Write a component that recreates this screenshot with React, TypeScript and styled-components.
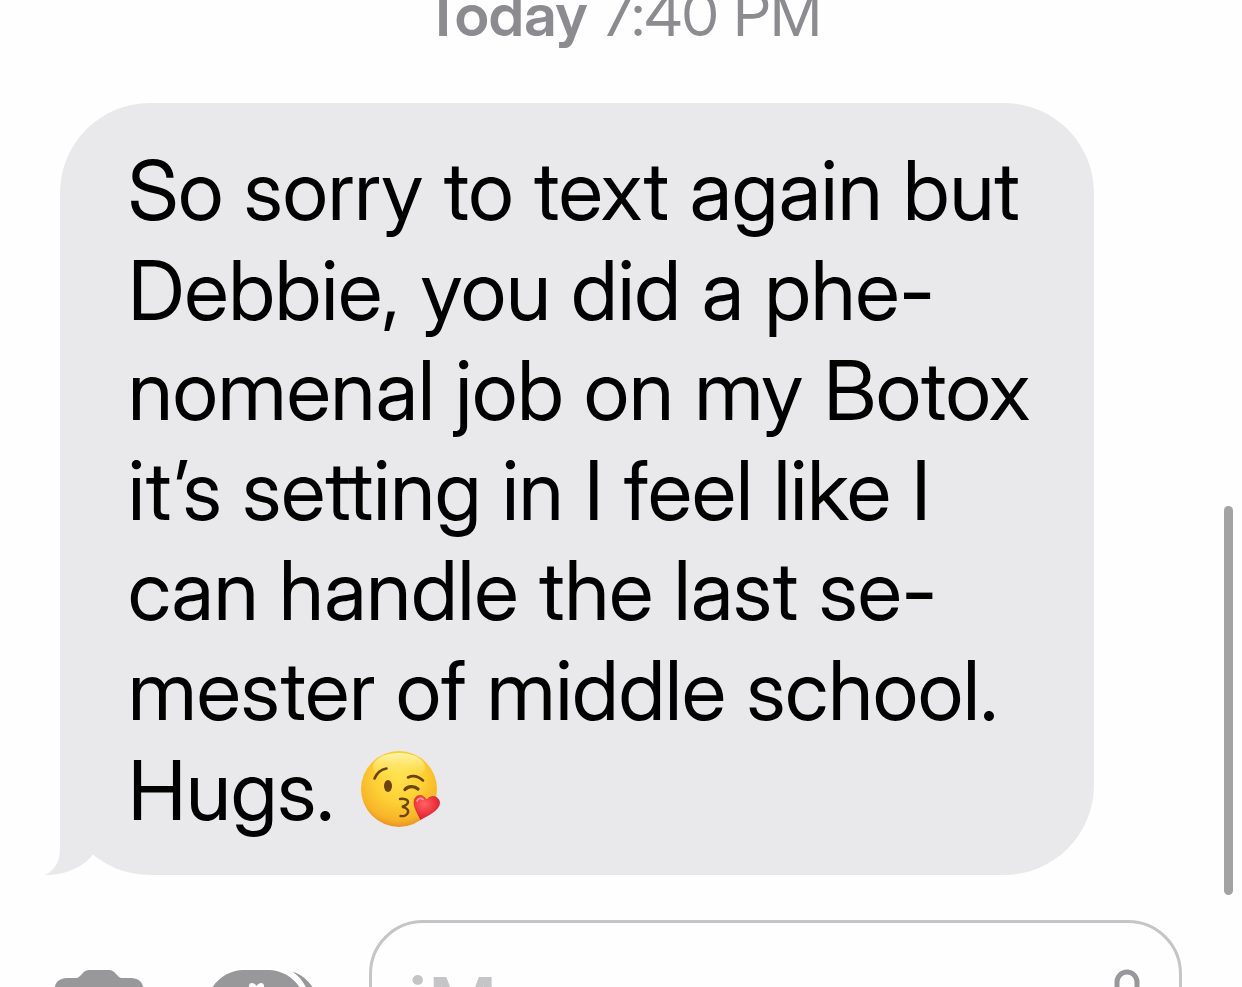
import React from "react";
import styled, { createGlobalStyle } from "styled-components";

const GlobalStyle = createGlobalStyle`
  *, *::before, *::after { box-sizing: border-box; }
  html, body { margin: 0; background: #fefefe; }
  body {
    font-family: "Inter Display", Inter, "Liberation Sans", sans-serif;
    font-feature-settings: "calt" 0, "liga" 0, "dlig" 0;
  }
`;

const Screen = styled.main`
  position: relative;
  height: 100vh;
  overflow: hidden;
  background: #fefefe;
`;

const Timestamp = styled.p`
  margin: -18px 0 0;
  padding-left: 4px;
  text-align: center;
  font-size: 60px;
  line-height: 64px;
  color: #8b8b90;
`;

const Day = styled.strong`
  font-weight: 600;
`;

const Bubble = styled.article`
  position: relative;
  margin: 57px 148px 0 60px;
  padding: 38px 0 34px 68px;
  border-radius: 90px;
  background: #e9e9eb;
  color: #000;
`;

const Tail = styled.svg`
  position: absolute;
  left: -16px;
  bottom: 0;
  width: 110px;
  height: 100px;
  fill: #e9e9eb;
`;

const Message = styled.p`
  position: relative;
  margin: 0;
  font-size: 82px;
  line-height: 100px;
`;

const Line = styled.span`
  display: block;
  height: 100px;
  white-space: nowrap;
`;

const Emoji = styled.svg`
  width: 80px;
  height: 80px;
  margin-left: 5px;
  vertical-align: -10px;
`;

const Composer = styled.form`
  display: flex;
  align-items: center;
  margin-top: 45px;
  padding: 0 60px 0 54px;
`;

const IconButton = styled.button<{ $width: number; $gap: number }>`
  flex: none;
  width: ${(p) => p.$width}px;
  height: 72px;
  margin: 0 ${(p) => p.$gap}px 0 0;
  padding: 0;
  border: 0;
  background: none;
  color: #98989a;

  svg {
    display: block;
  }
`;

const Field = styled.div`
  flex: 1;
  min-width: 0;
  display: flex;
  align-items: center;
  height: 170px;
  padding-left: 36px;
  border: 3px solid #c5c5c7;
  border-radius: 54px;
`;

const TextInput = styled.input`
  flex: 1;
  min-width: 0;
  height: 100px;
  padding: 0;
  border: 0;
  outline: 0;
  background: none;
  font: 500 77px/100px Inter, "Liberation Sans", sans-serif;

  &::placeholder {
    color: #c5c5c7;
    opacity: 1;
  }
`;

const ScrollThumb = styled.div`
  position: absolute;
  top: 506px;
  right: 9px;
  width: 9px;
  height: 389px;
  border-radius: 5px;
  background: #a3a3a3;
`;

const BODY = [
  "So sorry to text again but",
  "Debbie, you did a phe-",
  "nomenal job on my Botox",
  "it’s setting in I feel like I",
  "can handle the last se-",
  "mester of middle school.",
];

function KissEmoji() {
  return (
    <Emoji viewBox="0 0 80 80" role="img" aria-label="Face blowing a kiss">
      <defs>
        <radialGradient id="face" cx="0.5" cy="0.36" r="0.64">
          <stop offset="0" stopColor="#ffe04a" />
          <stop offset="0.5" stopColor="#fdd035" />
          <stop offset="0.85" stopColor="#f8b428" />
          <stop offset="1" stopColor="#e99322" />
        </radialGradient>
        <linearGradient id="shine" x1="0" y1="0" x2="0" y2="1">
          <stop offset="0" stopColor="#fffbb8" stopOpacity="0.9" />
          <stop offset="1" stopColor="#ffe95c" stopOpacity="0" />
        </linearGradient>
        <radialGradient id="heart" cx="0.4" cy="0.35" r="0.7">
          <stop offset="0" stopColor="#ff6262" />
          <stop offset="0.6" stopColor="#ee3440" />
          <stop offset="1" stopColor="#cf1f30" />
        </radialGradient>
      </defs>
      <circle cx="39" cy="39" r="38" fill="url(#face)" />
      <ellipse cx="39" cy="17" rx="26" ry="14" fill="url(#shine)" />
      <g fill="none" stroke="#6b430c" strokeLinecap="round">
        <path d="M14.500 28.500C17 22.500 21 19.500 26.500 18.500" strokeWidth="2.600" />
        <path d="M48 27.500C53 25 58 26 63 30.500" strokeWidth="2.600" />
        <path d="M45 39.500C48 36 54 35.500 58 39" strokeWidth="3.400" />
        <path
          d="M40 49C44 48 48.500 50 48 52.500C47.500 55 44 56 42 57C45 57 49 59.500 48 62.500C47 65.500 43.500 66.500 40.500 66"
          strokeWidth="2.400"
        />
      </g>
      <ellipse cx="28" cy="36" rx="4" ry="6" fill="#6b430c" />
      <path
        d="M60.500 69.500C57 62 52.500 55 54.500 49.500C56.500 44 63.500 44 66.500 50C71 44.500 78 46 79.500 51.500C81 59 70 64.500 60.500 69.500Z"
        fill="url(#heart)"
        stroke="#c9202f"
        strokeWidth="0.600"
      />
      <path d="M57 51C58 48.500 61 47.500 63 49.500" fill="none" stroke="#ff9b96" strokeWidth="1.600" strokeLinecap="round" />
    </Emoji>
  );
}

export default function App() {
  return (
    <>
      <GlobalStyle />
      <Screen>
        <Timestamp>
          <Day>Today</Day> 7:40 PM
        </Timestamp>
        <Bubble>
          <Tail viewBox="0 0 110 100" aria-hidden="true">
            <path d="M16 5V74C16 86 11 95 1 100C19 100 36 94 47 82L60 60L40 5Z" />
          </Tail>
          <Message>
            {BODY.map((line) => (
              <Line key={line}>{line}</Line>
            ))}
            <Line>
              Hugs. <KissEmoji />
            </Line>
          </Message>
        </Bubble>
        <Composer onSubmit={(e) => e.preventDefault()}>
          <IconButton type="button" aria-label="Camera" $width={90} $gap={67}>
            <svg width="90" height="72" viewBox="0 0 90 72" fill="currentColor" aria-hidden="true">
              <path
                fillRule="evenodd"
                d="M28 5C30.500 2 32 1 36 1H54C58 1 59.500 2 62 5L64 7C65.500 8.700 67 9 69 9H77C85 9 89.500 14 89.500 21V59C89.500 67 85 71 77 71H13C5 71 0.500 67 0.500 59V21C0.500 14 5 9 13 9H21C23 9 24.500 8.700 26 7ZM45 20A20 20 0 1 0 45 60A20 20 0 1 0 45 20Z"
              />
            </svg>
          </IconButton>
          <IconButton type="button" aria-label="Apps" $width={104} $gap={54}>
            <svg
              width="104"
              height="72"
              viewBox="0 0 104 72"
              fill="currentColor"
              overflow="visible"
              aria-hidden="true"
            >
              <path d="M32 1H58C75 1 94 16 94 36S75 71 58 71H32C15 71 -4 56 -4 36S15 1 32 1Z" />
              <path d="M82 3C94 6 107 20 107 36S94 66 82 69C93 61 99 49 99 36S93 11 82 3Z" />
              <path
                d="M46 26C40 21 38 19 38 17C38 13 43 13 45.500 17C48 13 53 13 53 17C53 19 51 21 46 26Z"
                fill="#fefefe"
              />
            </svg>
          </IconButton>
          <Field>
            <TextInput type="text" placeholder="iMessage" aria-label="iMessage" />
            <IconButton type="button" aria-label="Dictate" $width={48} $gap={28}>
              <svg
                width="48"
                height="72"
                viewBox="0 0 48 72"
                fill="none"
                stroke="currentColor"
                strokeWidth="5"
                strokeLinecap="round"
                aria-hidden="true"
              >
                <rect x="14" y="3" width="20" height="40" rx="10" />
                <path d="M4 30C4 62 44 62 44 30M24 54V68M12 69H36" />
              </svg>
            </IconButton>
          </Field>
        </Composer>
        <ScrollThumb />
      </Screen>
    </>
  );
}
